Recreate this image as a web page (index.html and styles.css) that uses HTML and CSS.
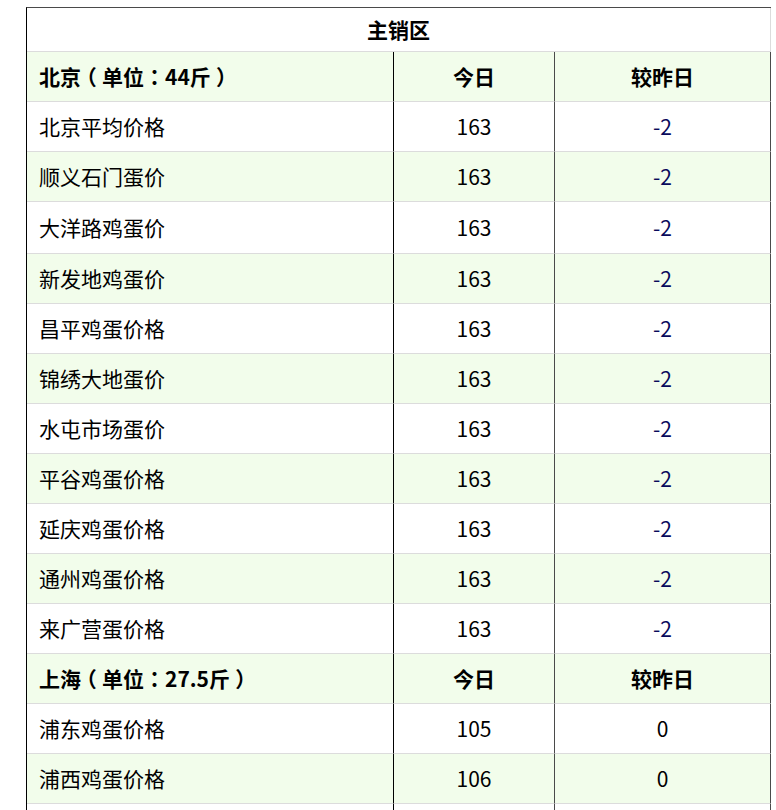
FILE: index.html
```html
<!DOCTYPE html>
<html lang="zh">
<head>
<meta charset="utf-8">
<title>主销区</title>
<link rel="stylesheet" href="styles.css">
</head>
<body>
<div class="wrap">
<table class="price">
  <colgroup>
    <col class="c1"><col class="c2"><col class="c3">
  </colgroup>
  <tr class="title"><td colspan="3">主销区</td></tr>
  <tr class="head"><td class="name">北京<span class="p">（</span>单位<span class="p">：</span>44斤<span class="p">）</span></td><td>今日</td><td>较昨日</td></tr>
  <tr><td class="name">北京平均价格</td><td>163</td><td class="chg">-2</td></tr>
  <tr><td class="name">顺义石门蛋价</td><td>163</td><td class="chg">-2</td></tr>
  <tr class="tall"><td class="name">大洋路鸡蛋价</td><td>163</td><td class="chg">-2</td></tr>
  <tr><td class="name">新发地鸡蛋价</td><td>163</td><td class="chg">-2</td></tr>
  <tr><td class="name">昌平鸡蛋价格</td><td>163</td><td class="chg">-2</td></tr>
  <tr><td class="name">锦绣大地蛋价</td><td>163</td><td class="chg">-2</td></tr>
  <tr><td class="name">水屯市场蛋价</td><td>163</td><td class="chg">-2</td></tr>
  <tr><td class="name">平谷鸡蛋价格</td><td>163</td><td class="chg">-2</td></tr>
  <tr><td class="name">延庆鸡蛋价格</td><td>163</td><td class="chg">-2</td></tr>
  <tr><td class="name">通州鸡蛋价格</td><td>163</td><td class="chg">-2</td></tr>
  <tr><td class="name">来广营蛋价格</td><td>163</td><td class="chg">-2</td></tr>
  <tr class="head"><td class="name">上海<span class="p">（</span>单位<span class="p">：</span>27.5斤<span class="p">）</span></td><td>今日</td><td>较昨日</td></tr>
  <tr><td class="name">浦东鸡蛋价格</td><td>105</td><td>0</td></tr>
  <tr><td class="name">浦西鸡蛋价格</td><td>106</td><td>0</td></tr>
  <tr class="blank"><td></td><td></td><td></td></tr>
</table>
</div>
</body>
</html>
```

FILE: styles.css
```css
html, body {
  margin: 0;
  padding: 0;
  background: #fff;
}
.wrap {
  padding: 7px 0 0 26px;
  height: 810px;
  overflow: hidden;
  box-sizing: border-box;
}
.price {
  border-collapse: separate;
  border-spacing: 0;
  table-layout: fixed;
  width: 745px;
  border-top: 1px solid #4a4a4a;
  border-left: 1px solid #000;
  font-family: "Noto Sans CJK SC", "Noto Sans", sans-serif;
  font-size: 21px;
  color: #000;
}
.c1 { width: 367px; }
.c2 { width: 161px; }
.c3 { width: 216px; }
.price td {
  box-sizing: border-box;
  height: 50px;
  padding: 0 0 2px 0;
  text-align: center;
  vertical-align: middle;
  border-bottom: 1px solid #dcdcdc;
  line-height: 24px;
}
.price tr.tall td {
  height: 52px;
}
.price tr:nth-child(even) td {
  background: #f2fdeb;
}
.price tr td:nth-child(1) { border-right: 1px solid #000; }
.price tr td:nth-child(2) { border-right: 1px solid #4a4a4a; }
.price tr td:nth-child(3) { border-right: 1px solid #4a4a4a; }
.price tr.title td {
  height: 44px;
  font-weight: bold;
  background: #fff;
  border-right: 1px solid #dcdcdc;
}
.price td.name {
  text-align: left;
  padding-left: 12px;
}
.price tr.head td {
  font-weight: bold;
}
.price .p {
  display: inline-block;
  width: 1em;
  text-align: center;
  font-family: "Noto Sans CJK JP", "Noto Sans CJK SC", sans-serif;
  font-feature-settings: "halt";
}
.price td.chg {
  color: #0a0a5c;
}
```
